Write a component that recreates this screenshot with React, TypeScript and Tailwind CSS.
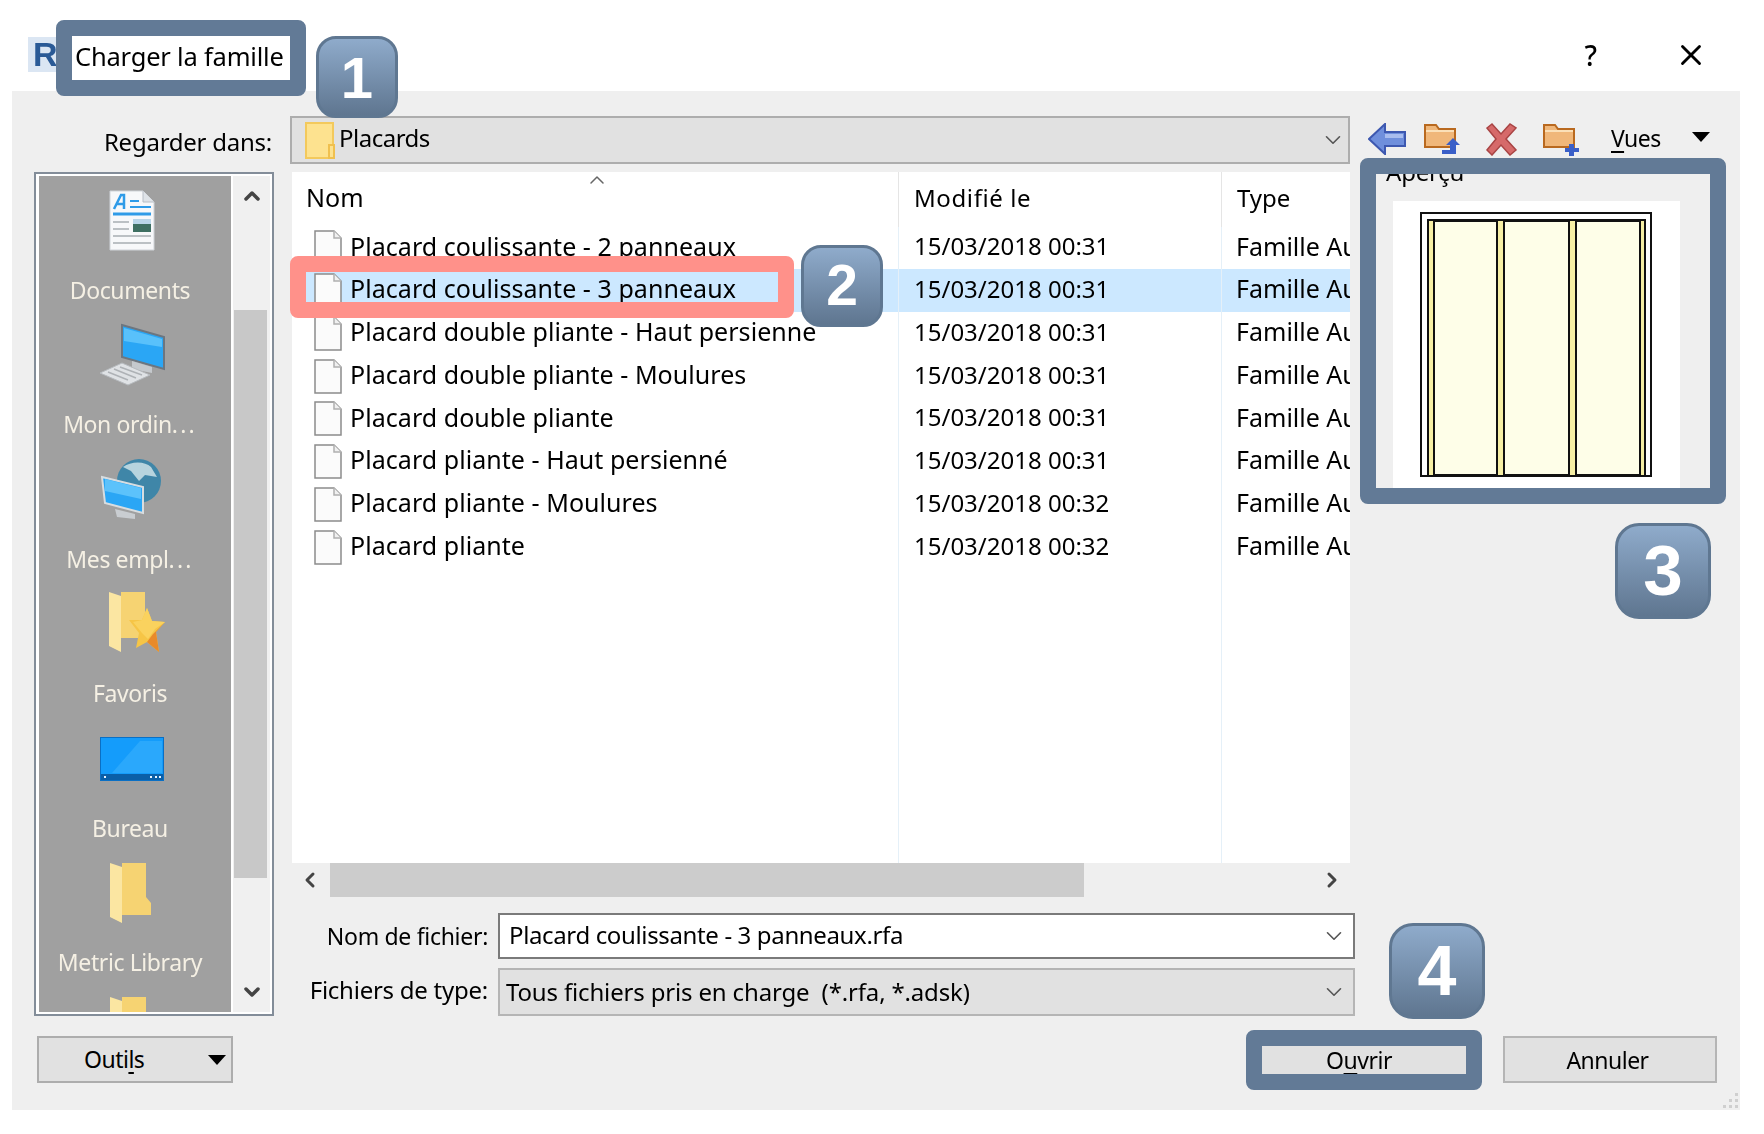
import { ChevronDown, ChevronLeft, ChevronRight, ChevronUp, X } from "lucide-react";

const FILES = [
  { name: "Placard coulissante - 2 panneaux", date: "15/03/2018 00:31" },
  { name: "Placard coulissante - 3 panneaux", date: "15/03/2018 00:31", selected: true },
  { name: "Placard double pliante - Haut persienne", date: "15/03/2018 00:31" },
  { name: "Placard double pliante - Moulures", date: "15/03/2018 00:31" },
  { name: "Placard double pliante", date: "15/03/2018 00:31" },
  { name: "Placard pliante - Haut persienné", date: "15/03/2018 00:31" },
  { name: "Placard pliante - Moulures", date: "15/03/2018 00:32" },
  { name: "Placard pliante", date: "15/03/2018 00:32" },
];

const FileIcon = () => (
  <svg width="28" height="35" viewBox="0 0 28 35" className="shrink-0">
    <path d="M1 1H20L27 8V34H1Z" fill="#fbfbfb" stroke="#8c8c8c" strokeWidth="1.5" />
    <path d="M20 1V8H27" fill="#f0f0f0" stroke="#b0b0b0" strokeWidth="1.5" />
  </svg>
);

const PlainFolder = () => (
  <svg width="42" height="60" viewBox="0 0 42 60" className="-ml-[3px]">
    <path d="M12 0H36V34L41 40V52H12Z" fill="#f6d372" />
    <path d="M0 0L12 4V60L0 54Z" fill="#fbe6a2" />
  </svg>
);

const StarFolder = () => (
  <svg width="58" height="64" viewBox="0 0 58 64" className="ml-[12px]">
    <path d="M12 0H36V46H12Z" fill="#f6d372" />
    <path d="M0 0L12 4V60L0 54Z" fill="#fbe6a2" />
    <path d="M38 16L43 29L56 30L47 40L50 60L38 50L27 56L30 41L20 28L33 28Z" fill="#f6c546" />
    <path d="M56 30L47 40L50 60L38 50L44 42Z" fill="#e98a2a" />
    <path d="M38 16L43 29L56 30L46 37L39 47L33 41L24 30L33 28Z" fill="#fad25e" />
  </svg>
);

const DocIcon = () => (
  <svg width="46" height="62" viewBox="0 0 46 62">
    <path d="M1 1H34L45 12V60H1Z" fill="#f7f8fa" stroke="#cfd3d8" />
    <path d="M34 1V12H45" fill="#dfe3e8" stroke="#b8bec6" />
    <path d="M5 19L12 5H15L15 19M8 14H15" fill="none" stroke="#2f9be8" strokeWidth="2.5" />
    <path d="M21 11H30M21 17H42" stroke="#2f9be8" strokeWidth="2" />
    <path d="M4 24H42" stroke="#2f9be8" strokeWidth="3" />
    <path d="M4 32H20M4 39H20M4 46H42M4 53H42" stroke="#a8adb3" strokeWidth="1.5" />
    <rect x="24" y="29" width="18" height="13" fill="#3e6f62" />
    <rect x="24" y="29" width="18" height="5" fill="#b9d5e8" />
  </svg>
);

const ComputerIcon = () => (
  <svg width="68" height="64" viewBox="0 0 68 64">
    <path d="M24 2L66 14V46L24 34Z" fill="#2aa6f5" stroke="#6c7680" strokeWidth="2" />
    <path d="M26 5L64 16V24L26 18Z" fill="#59c1fb" />
    <path d="M34 38L54 44V50L34 46Z" fill="#c5c9cd" />
    <path d="M2 50L24 40L52 52L30 62Z" fill="#dfe2e5" stroke="#b6babe" />
    <path d="M10 49L30 57M16 46L38 55M22 44L44 52" stroke="#aeb2b6" strokeWidth="1.5" />
  </svg>
);

const PlacesIcon = () => (
  <svg width="62" height="62" viewBox="0 0 62 62">
    <circle cx="38" cy="22" r="22" fill="#3f86a8" />
    <path d="M22 8C30 2 44 2 50 8L56 18L44 16L38 22L30 12Z" fill="#b7d4de" />
    <path d="M1 18L42 28V54L4 44Z" fill="#2aa6f5" stroke="#d8dde0" strokeWidth="2" />
    <path d="M4 20L40 29V40L4 32Z" fill="#5cc2fb" />
    <path d="M14 50L34 55V60L16 58Z" fill="#c9cdd1" />
  </svg>
);

const DesktopIcon = () => (
  <svg width="64" height="44" viewBox="0 0 64 44">
    <rect x="0.5" y="0.5" width="63" height="43" fill="#149cfb" stroke="#0a6fc4" />
    <path d="M12 36L40 4H62V36Z" fill="#2aa8fc" />
    <rect x="1" y="37" width="62" height="6" fill="#0a5fa8" />
    <path d="M4 40H6M50 40H52M55 40H57M59 40H61" stroke="#e8f4ff" strokeWidth="2" />
  </svg>
);

const NAV_ITEMS = [
  { label: "Documents", icon: <DocIcon /> },
  { label: "Mon ordin", dots: true, icon: <ComputerIcon /> },
  { label: "Mes empl", dots: true, icon: <PlacesIcon /> },
  { label: "Favoris", icon: <StarFolder /> },
  { label: "Bureau", icon: <DesktopIcon /> },
  { label: "Metric Library", icon: <PlainFolder /> },
  { label: "", icon: <PlainFolder /> },
];

const SmallFolder = ({ badge }: { badge: "up" | "plus" }) => (
  <svg width="38" height="34" viewBox="0 0 38 34">
    <path d="M1 3H12L15 7H31V25H1Z" fill="#f0b77a" stroke="#b9691f" strokeWidth="2" />
    <path d="M2 9H30" stroke="#fbe0b8" strokeWidth="2" />
    {badge === "up" ? (
      <path d="M18 32V28H26V23H22L29 16L36 23H32V32Z" fill="#3a5fc8" />
    ) : (
      <path d="M26 22H31V26H36V30H31V34H26V30H22V26H26Z" fill="#3a5fc8" />
    )}
  </svg>
);

const Caret = () => (
  <svg width="18" height="10" viewBox="0 0 18 10">
    <path d="M0 0H18L9 10Z" fill="#000" />
  </svg>
);

const Badge = ({ digit, className }: { digit: string; className: string }) => (
  <div
    className={`absolute flex items-center justify-center border-[3px] border-[#5f7791] bg-linear-to-b from-[#8fabcb] to-[#5f7690] font-['Liberation_Sans',sans-serif] font-bold text-white ${className}`}
  >
    {digit}
  </div>
);

const Frame = ({ className }: { className: string }) => (
  <div className={`absolute border-[16px] border-[#627a96] rounded-lg ${className}`} />
);

const App = () => {
  return (
    <div className="relative w-[1764px] h-[1134px] overflow-hidden bg-white font-['Noto_Sans',sans-serif] text-[24px] text-black">
      <div className="blur-[0.5px]">
        <div className="flex h-[91px] items-start">
          <div className="mt-[37px] ml-[28px] flex h-[35px] w-[30px] items-center bg-[#dbe6f3] pl-[5px] font-['Liberation_Sans',sans-serif] text-[34px] font-bold text-[#2a5a96]">
            R
          </div>
          <div className="ml-[17px] mt-[36px] text-[25.5px] leading-[40px] tracking-[-0.2px]">Charger la famille</div>
          <div className="ml-auto mt-[35px] pr-[2px] text-[28px] font-medium leading-[40px]">?</div>
          <X className="mt-[38px] ml-[75px] mr-[56px]" size={34} strokeWidth={2} />
        </div>

        <div className="h-[1019px] w-[1728px] ml-[12px] bg-[#efefef] pt-[25px] pl-[22px]">
          <div className="flex h-[48px] items-center">
            <div className="w-[238px] mt-[4px] text-right tracking-[-0.25px]">Regarder dans:</div>
            <div className="ml-[18px] flex h-[48px] w-[1060px] items-center border-2 border-[#adadad] bg-[#e1e1e1] pl-[13px] pr-[2px]">
              <svg width="30" height="37" viewBox="0 0 30 37" className="shrink-0">
                <rect x="1" y="1" width="27" height="35" fill="#fde28f" stroke="#f3c95c" strokeWidth="2" />
                <rect x="24" y="23" width="5" height="13" fill="#fde28f" stroke="#f0c04e" strokeWidth="2" />
              </svg>
              <span className="ml-[4px] -mt-[4px] tracking-[-0.5px]">Placards</span>
              <ChevronDown className="ml-auto text-[#555]" size={26} strokeWidth={1.5} />
            </div>
            <svg width="38" height="32" viewBox="0 0 38 32" className="ml-[18px] -mt-[2px] shrink-0">
              <path d="M1 16L17 1V9H37V23H17V31Z" fill="#6f8fdc" stroke="#3d58b0" strokeWidth="2" />
              <path d="M17 11H35V15H17Z" fill="#a9bdee" />
            </svg>
            <div className="ml-[18px] -mt-[3px] shrink-0"><SmallFolder badge="up" /></div>
            <svg width="34" height="34" viewBox="0 0 34 34" className="ml-[22px] -mt-[3px] shrink-0">
              <path d="M3 6L8 2L17 12L26 2L32 6L22 17L32 28L26 33L17 23L8 33L3 28L12 17Z" fill="#d66a6a" stroke="#a94444" strokeWidth="1.5" />
            </svg>
            <div className="ml-[25px] -mt-[3px] shrink-0"><SmallFolder badge="plus" /></div>
            <div className="ml-[30px] -mt-[4px] text-[23px] tracking-[-0.5px]">
              <span className="underline underline-offset-4">V</span>ues
            </div>
            <div className="ml-[31px] -mt-[6px]"><Caret /></div>
          </div>

          <div className="mt-[8px] flex">
            <div className="flex h-[844px] w-[240px] shrink-0 border-2 border-[#838d99] bg-white py-[2px] pl-[3px] pr-[2px]">
              <div className="w-[192px] overflow-hidden bg-[#a0a0a0] pr-[10px] text-[#f5f0e4] text-[23px] tracking-[-0.4px]">
                {NAV_ITEMS.map((item, i) => (
                  <div key={i} className="h-[134.4px] flex flex-col items-center">
                    <div className="flex h-[90px] shrink-0 items-center justify-center pl-[4px]">{item.icon}</div>
                    <div className="h-[44.4px] whitespace-nowrap leading-[48px]">
                      {item.label}
                      {item.dots && <span className="tracking-[2.2px]">...</span>}
                    </div>
                  </div>
                ))}
              </div>
              <div className="ml-[2px] flex w-[37px] flex-col bg-[#f0f0f0]">
                <div className="flex h-[40px] items-center justify-center">
                  <ChevronUp size={24} strokeWidth={3.5} className="text-[#444]" />
                </div>
                <div className="mt-[94px] h-[568px] w-[33px] ml-[1px] bg-[#c8c8c8]" />
                <div className="mt-auto flex h-[40px] items-center justify-center">
                  <ChevronDown size={24} strokeWidth={3.5} className="text-[#444]" />
                </div>
              </div>
            </div>

            <div className="ml-[18px] w-[1058px] shrink-0">
              <div className="flex h-[691px] flex-col overflow-hidden bg-white whitespace-nowrap">
                <div className="relative grid h-[54.5px] shrink-0 grid-cols-[607px_323px_128px] items-stretch">
                  <div className="border-r border-[#e5e5e5] pl-[14px] text-[25px] leading-[50px]">Nom</div>
                  <div className="border-r border-[#e5e5e5] pl-[15px] leading-[52px] tracking-[0.6px]">Modifié le</div>
                  <div className="pl-[15px] leading-[52px]">Type</div>
                  <ChevronUp className="absolute left-[293px] -top-[4px] text-[#666]" size={24} strokeWidth={1.5} />
                </div>
                {FILES.map((file) => (
                  <div
                    key={file.name}
                    className={`grid h-[42.75px] shrink-0 grid-cols-[607px_323px_128px] items-center ${file.selected ? "bg-[#cce8ff]" : ""}`}
                  >
                    <div className="flex h-full items-center border-r border-[#e5f0f8] pl-[22px]">
                      <FileIcon />
                      <span className="ml-[8px] -mt-[3px] text-[25px] tracking-[0.05px]">{file.name}</span>
                    </div>
                    <div className="flex h-full items-center border-r border-[#e5f0f8] pl-[15px]">
                      <span className="-mt-[3px]">{file.date}</span>
                    </div>
                    <div className="flex h-full items-center overflow-hidden pl-[14px]">
                      <span className="-mt-[3px] text-[25px]">Famille Autodesk</span>
                    </div>
                  </div>
                ))}
                <div className="grid flex-1 grid-cols-[607px_323px_128px]">
                  <div className="border-r border-[#e5f0f8]" />
                  <div className="border-r border-[#e5f0f8]" />
                  <div />
                </div>
              </div>

              <div className="flex h-[34px] items-center">
                <ChevronLeft className="ml-[6px] text-[#444]" size={24} strokeWidth={3} />
                <div className="ml-[8px] h-full w-[754px] bg-[#cccccc]" />
                <ChevronRight className="ml-auto mr-[6px] text-[#444]" size={24} strokeWidth={3} />
              </div>

              <div className="mt-[16px] flex h-[46px] items-center">
                <div className="w-[196px] shrink-0 text-right text-[23px] tracking-[-0.3px]">Nom de fichier:</div>
                <div className="ml-[10px] flex h-[46px] w-[857px] shrink-0 items-center border-2 border-[#7a7a7a] bg-white pl-[9px] pr-[6px] tracking-[-0.36px]">
                  <span className="-mt-[2px]">Placard coulissante - 3 panneaux.rfa</span>
                  <ChevronDown className="ml-auto text-[#555]" size={26} strokeWidth={1.5} />
                </div>
              </div>
              <div className="mt-[9px] flex h-[48px] items-center">
                <div className="w-[196px] shrink-0 -mt-[4px] text-right text-[24px] tracking-[-0.25px]">Fichiers de type:</div>
                <div className="ml-[10px] flex h-[48px] w-[857px] shrink-0 items-center border-2 border-[#b5b5b5] bg-[#e1e1e1] pl-[6px] pr-[6px] tracking-[-0.16px]">
                  <span>Tous fichiers pris en charge&nbsp; (*.rfa, *.adsk)</span>
                  <ChevronDown className="ml-auto text-[#555]" size={26} strokeWidth={1.5} />
                </div>
              </div>
            </div>

            <div className="ml-[16px]">
              <div className="-mt-[12px] ml-[20px] leading-[24px] tracking-[-0.2px]">Aperçu</div>
              <div className="mt-[17px] ml-[27px] h-[287px] w-[287px] bg-white">
                <svg width="287" height="287" viewBox="0 0 287 287">
                  <rect x="28" y="12" width="230" height="263" fill="#fff" stroke="#111" strokeWidth="2" />
                  <rect x="35" y="19" width="217" height="256" fill="#f6efa4" stroke="#111" strokeWidth="2" />
                  <path d="M41 20H104V274H41ZM111 20H176V274H111ZM183 20H247V274H183Z" fill="#fefee8" stroke="#111" strokeWidth="2" />
                </svg>
              </div>
            </div>
          </div>

          <div className="mt-[20px] flex items-start">
            <div className="ml-[3px] flex h-[47px] w-[196px] items-center border-2 border-[#adadad] bg-[#e1e1e1] pl-[45px] text-[23px] tracking-[-0.5px]">
              <span>Outi<span className="underline underline-offset-4">l</span>s</span>
              <div className="ml-auto mr-[5px]"><Caret /></div>
            </div>
            <div className="ml-auto flex h-[47px] w-[214px] items-center justify-center bg-[#e1e1e1] pr-[4px] pt-[2px] text-[23px] tracking-[-0.5px]">
              <span>O<span className="underline underline-offset-4">u</span>vrir</span>
            </div>
            <div className="ml-[35px] mr-[23px] flex h-[47px] w-[214px] items-center justify-center border-2 border-[#b5b5b5] bg-[#e1e1e1] pr-[5px] pt-[2px] text-[23px] tracking-[-0.5px]">
              Annuler
            </div>
          </div>
        </div>
      </div>

      <svg width="18" height="18" viewBox="0 0 18 18" className="absolute left-[1722px] top-[1092px]">
        <path d="M13 1H16V4H13ZM13 7H16V10H13ZM7 7H10V10H7ZM13 13H16V16H13ZM7 13H10V16H7ZM1 13H4V16H1Z" fill="#cfcfcf" />
      </svg>

      <Frame className="left-[56px] top-[20px] w-[250px] h-[76px]" />
      <Frame className="left-[1360px] top-[158px] w-[366px] h-[346px]" />
      <Frame className="left-[1246px] top-[1030px] w-[236px] h-[60px]" />
      <div className="absolute left-[290px] top-[256px] h-[62px] w-[504px] rounded-lg border-[16px] border-[#ff918a]" />

      <Badge digit="1" className="left-[316px] top-[36px] h-[82px] w-[82px] rounded-[20px] text-[58px]" />
      <Badge digit="2" className="left-[801px] top-[245px] h-[82px] w-[82px] rounded-[20px] text-[57px]" />
      <Badge digit="3" className="left-[1615px] top-[523px] h-[96px] w-[96px] rounded-[24px] text-[71px]" />
      <Badge digit="4" className="left-[1389px] top-[923px] h-[96px] w-[96px] rounded-[24px] text-[70px]" />
    </div>
  );
};

export default App;
